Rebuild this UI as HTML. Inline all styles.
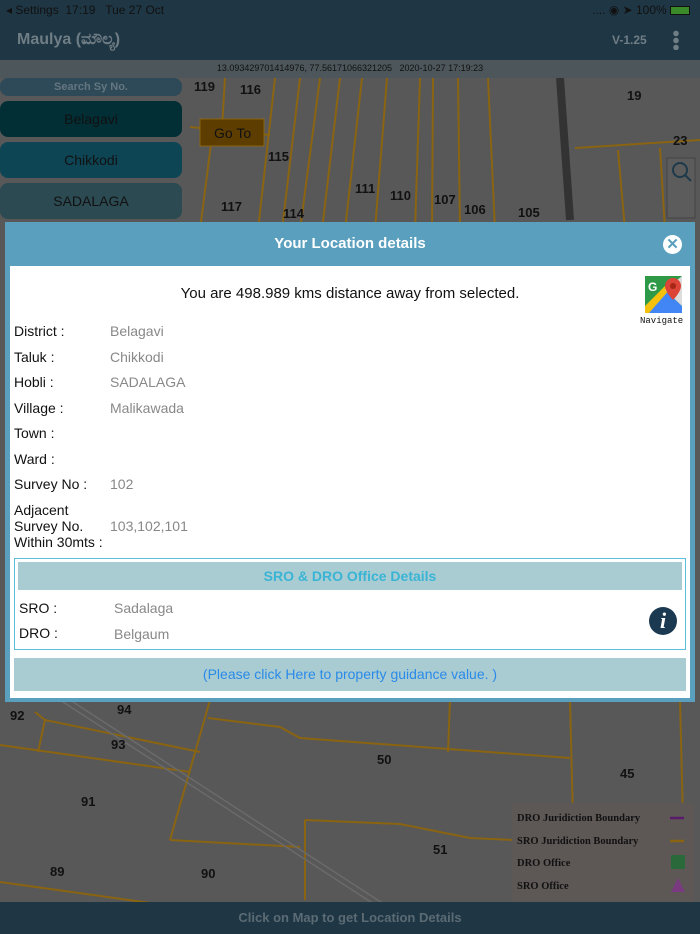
<!DOCTYPE html>
<html><head><meta charset="utf-8"><style>
*{margin:0;padding:0;box-sizing:border-box}
body{width:700px;height:934px;overflow:hidden;position:relative;background:#585858;font-family:"Liberation Sans",sans-serif}
.abs{position:absolute}
.lbl{position:absolute;left:14px;font-size:14px;color:#111}
.val{position:absolute;left:110px;font-size:14px;color:#888}
</style></head><body>
<!-- map -->
<svg class="abs" style="left:0;top:0" width="700" height="934">
<rect width="700" height="934" fill="#585858"/>
<g stroke="#8a6410" stroke-width="2" fill="none">
<path d="M190 127 L270 135"/><path d="M225 78 L222 128"/><path d="M213 128 L200 230"/>
<path d="M275 78 L258 230"/><path d="M300 78 L282 230"/><path d="M320 78 L300 230"/><path d="M340 78 L322 230"/>
<path d="M362 78 L345 230"/><path d="M387 78 L375 230"/><path d="M420 78 L415 230"/><path d="M433 78 L432 230"/>
<path d="M458 78 L460 230"/><path d="M488 78 L495 230"/><path d="M575 148 L700 140"/><path d="M618 150 L625 230"/><path d="M660 148 L665 230"/>
<path d="M35 712 L45 720 L200 752"/><path d="M45 720 L38 752"/><path d="M0 745 L190 772"/><path d="M210 700 L170 840"/>
<path d="M208 718 L280 727 L300 738 L570 758"/><path d="M450 700 L448 752"/><path d="M570 700 L575 900"/>
<path d="M305 820 L305 900"/><path d="M305 820 L400 824 L470 838 L515 840"/><path d="M170 840 L300 847"/>
<path d="M0 882 L165 905"/><path d="M120 902 L110 934"/><path d="M680 700 L685 900"/>
</g>
<path d="M560 78 L570 220" stroke="#333" stroke-width="8"/>
<path d="M60 700 L420 934 M70 700 L430 934" stroke="#6a6a6a" stroke-width="1.5"/>
<g font-size="13" font-weight="bold" fill="#111" font-family="Liberation Sans">
<text x="194" y="91">119</text><text x="240" y="94">116</text><text x="627" y="100">19</text><text x="673" y="145">23</text>
<text x="268" y="161">115</text><text x="355" y="193">111</text><text x="390" y="200">110</text><text x="434" y="204">107</text>
<text x="464" y="214">106</text><text x="518" y="217">105</text><text x="221" y="211">117</text><text x="283" y="218">114</text>
<text x="10" y="720">92</text><text x="117" y="714">94</text><text x="111" y="749">93</text><text x="377" y="764">50</text>
<text x="620" y="778">45</text><text x="81" y="806">91</text><text x="433" y="854">51</text><text x="50" y="876">89</text><text x="201" y="878">90</text>
</g>
<rect x="200" y="119" width="64" height="27" fill="#5e3e00" stroke="#8a6410"/>
<text x="214" y="138" font-size="14" fill="#111" font-family="Liberation Sans">Go To</text>
<rect x="667" y="158" width="28" height="60" fill="#5c5c5c" stroke="#444"/>
<circle cx="680" cy="170" r="7" fill="none" stroke="#1e3a4a" stroke-width="2"/><path d="M685 175 L691 181" stroke="#1e3a4a" stroke-width="2"/>
<rect x="512" y="803" width="182" height="100" fill="#5d5856"/>
<g font-family="Liberation Serif" font-weight="bold" font-size="10.5" fill="#111">
<text x="517" y="821">DRO Juridiction Boundary</text><text x="517" y="844">SRO Juridiction Boundary</text>
<text x="517" y="866">DRO Office</text><text x="517" y="889">SRO Office</text></g>
<path d="M670 818 H684" stroke="#5a1a6a" stroke-width="2.5"/><path d="M670 841 H684" stroke="#8a6410" stroke-width="2.5"/>
<rect x="671" y="855" width="14" height="14" fill="#2a6a3a"/><path d="M678 878 L685 892 L671 892Z" fill="#7a3a80"/>
</svg>
<!-- top bars -->
<div class="abs" style="left:0;top:0;width:700px;height:60px;background:#1f3644"></div>
<div class="abs" style="left:6px;top:3px;font-size:12px;color:#111">◂ Settings &nbsp;17:19 &nbsp; Tue 27 Oct</div>
<div class="abs" style="right:10px;top:3px;font-size:12px;color:#111">.... ◉ ➤ 100% <span style="display:inline-block;width:20px;height:9px;background:#3a8a2a;border:1px solid #111;vertical-align:middle"></span></div>
<div class="abs" style="left:17px;top:31px;font-size:16px;font-weight:bold;color:#6f7d85">Maulya (ಮೌಲ್ಯ)</div>
<div class="abs" style="left:612px;top:33px;font-size:12px;font-weight:bold;color:#6f7d85">V-1.25</div>
<div class="abs" style="left:673px;top:30px;width:6px;height:20px;background:radial-gradient(circle,#6f7d85 2.5px,transparent 3px) 0 0/6px 7px"></div>
<div class="abs" style="left:0;top:60px;width:700px;height:18px;background:#4d565b;font-size:9px;color:#111;text-align:center;line-height:17px">13.093429701414976, 77.56171066321205 &nbsp; 2020-10-27 17:19:23</div>
<div class="abs" style="left:0;top:78px;width:182px;height:18px;border-radius:8px;background:#2e4a58;color:#647680;font-size:11px;font-weight:bold;text-align:center;line-height:18px">Search Sy No.</div>
<div class="abs" style="left:0;top:101px;width:182px;height:36px;border-radius:8px;background:#022e36;color:#111;font-size:14px;text-align:center;line-height:36px">Belagavi</div>
<div class="abs" style="left:0;top:142px;width:182px;height:36px;border-radius:8px;background:#0e4555;color:#111;font-size:14px;text-align:center;line-height:36px">Chikkodi</div>
<div class="abs" style="left:0;top:183px;width:182px;height:36px;border-radius:8px;background:#2c4a52;color:#111;font-size:14px;text-align:center;line-height:36px">SADALAGA</div>
<!-- bottom bar -->
<div class="abs" style="left:0;top:902px;width:700px;height:32px;background:#1f3644;color:#5b6b74;font-size:13px;font-weight:bold;text-align:center;line-height:32px">Click on Map to get Location Details</div>
<!-- modal -->
<div class="abs" style="left:5px;top:222px;width:690px;height:480px;background:#5a9fbe"></div>
<div class="abs" style="left:5px;top:222px;width:690px;height:44px;color:#fff;font-size:15px;font-weight:bold;text-align:center;line-height:44px">Your Location details</div>
<div class="abs" style="left:663px;top:235px;width:19px;height:19px;border-radius:50%;background:#fff;color:#5a9fbe;font-size:15px;font-weight:bold;text-align:center;line-height:19px">✕</div>
<div class="abs" style="left:10px;top:266px;width:680px;height:432px;background:#fff"></div>
<div class="abs" style="left:10px;top:285px;width:680px;text-align:center;font-size:15px;color:#111">You are 498.989 kms distance away from selected.</div>
<svg class="abs" style="left:645px;top:276px" width="37" height="37"><rect width="37" height="37" fill="#2e9a48"/><path d="M0 37 L20 14 L37 30 V37Z" fill="#4285f4"/><path d="M0 30 L22 8 L26 12 L4 37 H0Z" fill="#f4c20d"/><path d="M20 14 L37 0 V30Z" fill="#ddd"/><text x="3" y="15" font-size="12" font-weight="bold" fill="#fff" font-family="Liberation Sans">G</text><path d="M28 2 a8 8 0 0 1 8 8 c0 6 -8 14 -8 14 c0 0 -8 -8 -8 -14 a8 8 0 0 1 8 -8z" fill="#db4437"/><circle cx="28" cy="10" r="3" fill="#a52714"/></svg>
<div class="abs" style="left:640px;top:316px;font-family:'Liberation Mono',monospace;font-size:9px;color:#111">Navigate</div>
<div class="lbl" style="top:323px">District :</div><div class="val" style="top:323px">Belagavi</div>
<div class="lbl" style="top:349px">Taluk :</div><div class="val" style="top:349px">Chikkodi</div>
<div class="lbl" style="top:374px">Hobli :</div><div class="val" style="top:374px">SADALAGA</div>
<div class="lbl" style="top:400px">Village :</div><div class="val" style="top:400px">Malikawada</div>
<div class="lbl" style="top:425px">Town :</div>
<div class="lbl" style="top:451px">Ward :</div>
<div class="lbl" style="top:476px">Survey No :</div><div class="val" style="top:476px">102</div>
<div class="lbl" style="top:502px;line-height:16px">Adjacent<br>Survey No.<br>Within 30mts :</div><div class="val" style="top:518px">103,102,101</div>
<div class="abs" style="left:14px;top:558px;width:672px;height:92px;border:1px solid #5bc0de"></div>
<div class="abs" style="left:18px;top:562px;width:664px;height:28px;background:#a9ccd3;color:#3ab4d4;font-size:14px;font-weight:bold;text-align:center;line-height:28px">SRO &amp; DRO Office Details</div>
<div class="lbl" style="left:19px;top:600px">SRO :</div><div class="val" style="left:114px;top:600px">Sadalaga</div>
<div class="lbl" style="left:19px;top:625px">DRO :</div><div class="val" style="left:114px;top:626px">Belgaum</div>
<div class="abs" style="left:649px;top:607px;width:28px;height:28px;border-radius:50%;background:#1b3a52;color:#fff;font-family:'Liberation Serif',serif;font-style:italic;font-weight:bold;font-size:22px;text-align:center;line-height:28px">i</div>
<div class="abs" style="left:14px;top:658px;width:672px;height:33px;background:#a9ccd3;color:#2a8ae8;font-size:14px;text-align:center;line-height:33px">(Please click Here to property guidance value. )</div>
</body></html>
